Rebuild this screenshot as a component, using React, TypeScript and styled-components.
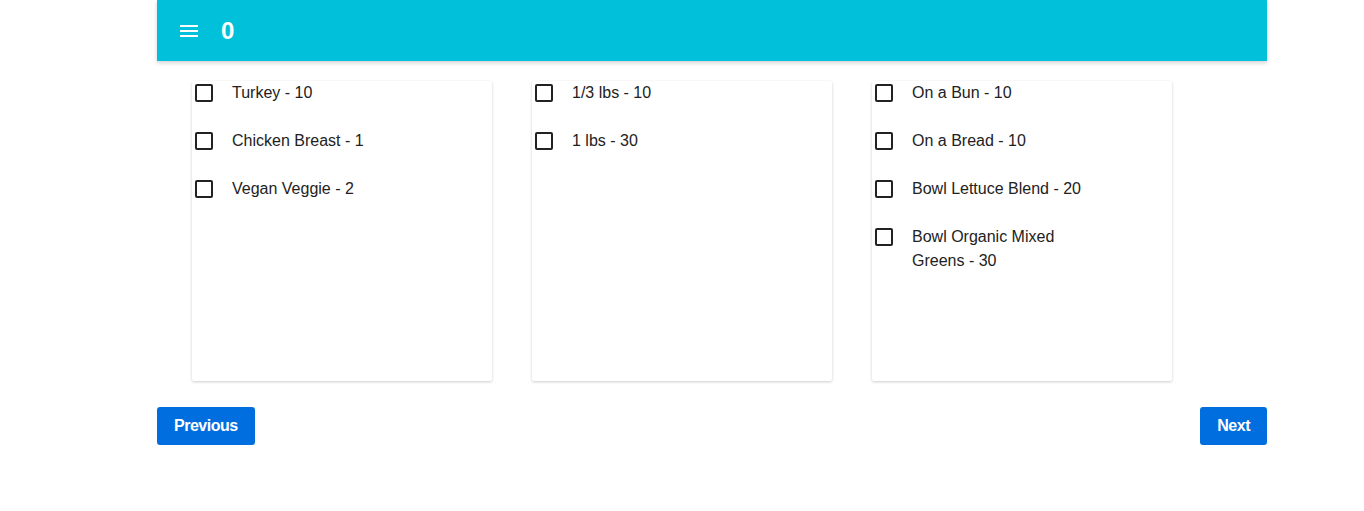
import styled, { createGlobalStyle } from "styled-components";
import { FC } from "react";

const GlobalStyle = createGlobalStyle`
  body {
    margin: 0;
    background: #fff;
    font-family: "Liberation Sans", Arial, sans-serif;
    color: #222;
  }
`;

const Page = styled.div`
  width: 1110px;
  margin-left: 157px;
`;

const TopBar = styled.header`
  display: flex;
  align-items: center;
  height: 61px;
  padding-left: 23px;
  gap: 23px;
  background: #00c1d9;
  box-shadow: 0 2px 4px rgba(0, 0, 0, 0.18);
`;

const MenuIcon = styled.svg`
  width: 18px;
  height: 14px;
  margin-top: 1px;
`;

const Counter = styled.span`
  color: #fff;
  font-size: 24px;
  font-weight: bold;
`;

const Columns = styled.div`
  display: flex;
  gap: 40px;
  padding-left: 35px;
  margin-top: 20px;
`;

const Card = styled.div`
  width: 300px;
  height: 300px;
  box-sizing: border-box;
  background: #fff;
  border-radius: 2px;
  box-shadow: 0 1px 3px rgba(0, 0, 0, 0.2);
`;

const Option = styled.label`
  display: flex;
  align-items: flex-start;
  margin-bottom: 24px;
  font-size: 16px;
  line-height: 24px;
  cursor: pointer;
`;

const Box = styled.span`
  flex: none;
  width: 18px;
  height: 18px;
  box-sizing: border-box;
  margin: 3px 19px 0 3px;
  border: 2px solid #222;
  border-radius: 2px;
`;

const OptionText = styled.span`
  width: 180px;
`;

const Footer = styled.div`
  display: flex;
  justify-content: space-between;
  margin-top: 26px;
`;

const Button = styled.button`
  height: 38px;
  padding: 0 17px;
  border: none;
  border-radius: 3px;
  background: #006edf;
  color: #fff;
  font-family: "Liberation Sans", Arial, sans-serif;
  font-size: 16px;
  letter-spacing: -0.5px;
  font-weight: bold;
  cursor: pointer;
`;

const columns: string[][] = [
  ["Turkey - 10", "Chicken Breast - 1", "Vegan Veggie - 2"],
  ["1/3 lbs - 10", "1 lbs - 30"],
  ["On a Bun - 10", "On a Bread - 10", "Bowl Lettuce Blend - 20", "Bowl Organic Mixed Greens - 30"],
];

const App: FC = () => {
  return (
    <Page>
      <GlobalStyle />
      <TopBar>
        <MenuIcon viewBox="0 0 18 14">
          <rect x="0" y="1" width="18" height="2" fill="#fff" />
          <rect x="0" y="6" width="18" height="2" fill="#fff" />
          <rect x="0" y="11" width="18" height="2" fill="#fff" />
        </MenuIcon>
        <Counter>0</Counter>
      </TopBar>
      <Columns>
        {columns.map((items, i) => (
          <Card key={i}>
            {items.map((item) => (
              <Option key={item}>
                <Box />
                <OptionText>{item}</OptionText>
              </Option>
            ))}
          </Card>
        ))}
      </Columns>
      <Footer>
        <Button>Previous</Button>
        <Button>Next</Button>
      </Footer>
    </Page>
  );
};

export default App;
